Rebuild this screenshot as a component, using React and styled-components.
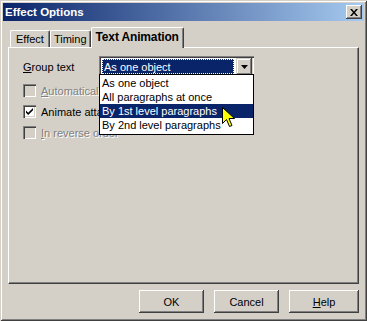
import styled, { createGlobalStyle } from 'styled-components'

const Global = createGlobalStyle`
    html, body {
        margin: 0;
        padding: 0;
        background: #d4d0c8;
    }
    body {
        font-family: 'Liberation Sans', Arial, sans-serif;
        font-size: 11px;
        color: #000;
    }
`

const options = ['As one object', 'All paragraphs at once', 'By 1st level paragraphs', 'By 2nd level paragraphs']

function App() {
    return (
        <>
            <Global />
            <Window>
                <TitleBar>
                    <Title>Effect Options</Title>
                    <CloseButton>
                        <svg width='8' height='7' viewBox='0 0 8 7'>
                            <path d='M0 0h2l2 2.5L6 0h2L5 3.5 8 7H6L4 4.5 2 7H0l3-3.5z' fill='#000' />
                        </svg>
                    </CloseButton>
                </TitleBar>

                <Body>
                    <TabRow>
                        <Tab>Effect</Tab>
                        <Tab $tight>Timing</Tab>
                        <Tab $active>Text Animation</Tab>
                    </TabRow>

                    <Panel>
                        <GroupRow>
                            <Label>
                                <u>G</u>roup text
                            </Label>
                            <Combo>
                                <ComboValue>
                                    <Focus>As one object</Focus>
                                </ComboValue>
                                <DropButton>
                                    <svg width='7' height='4' viewBox='0 0 7 4'>
                                        <path d='M0 0h7L3.5 4z' fill='#000' />
                                    </svg>
                                </DropButton>
                                <List>
                                    {options.map((o, i) => (
                                        <Option key={o} $selected={i === 2}>
                                            {o}
                                        </Option>
                                    ))}
                                </List>
                                <Cursor width='13' height='21' viewBox='0 0 13 21'>
                                    <path
                                        d='M0.5 0.5V16.5L4.5 12.5L7.5 19.5L10 18.5L7 11.5H12.5Z'
                                        fill='#ffff00'
                                        stroke='#000'
                                        strokeWidth='1'
                                    />
                                </Cursor>
                            </Combo>
                        </GroupRow>

                        <CheckRow $disabled>
                            <Box $disabled />
                            <span>
                                <u>A</u>utomatically after
                            </span>
                        </CheckRow>
                        <CheckRow>
                            <Box>
                                <svg width='9' height='9' viewBox='0 0 9 9'>
                                    <path d='M1 3.5l2.2 2.2L8 1v2.2L3.2 8 1 5.8z' fill='#000' />
                                </svg>
                            </Box>
                            <span>Animate attached shape</span>
                        </CheckRow>
                        <CheckRow $disabled>
                            <Box $disabled />
                            <span>
                                <u>I</u>n reverse order
                            </span>
                        </CheckRow>
                    </Panel>

                    <Footer>
                        <Button>OK</Button>
                        <Button>Cancel</Button>
                        <Button $wide>
                            <u>H</u>elp
                        </Button>
                    </Footer>
                </Body>
            </Window>
        </>
    )
}

const Window = styled.div`
    width: 367px;
    height: 321px;
    box-sizing: border-box;
    padding: 3px;
    background: #d4d0c8;
    box-shadow:
        inset 1px 1px 0 #d4d0c8,
        inset -1px -1px 0 #404040,
        inset 2px 2px 0 #ffffff,
        inset -2px -2px 0 #808080;
    display: flex;
    flex-direction: column;
`

const TitleBar = styled.div`
    height: 18px;
    display: flex;
    align-items: center;
    justify-content: space-between;
    padding: 0 2px 0 2px;
    background: linear-gradient(to right, #0a246a, #a6caf0);
`

const Title = styled.div`
    color: #fff;
    font-weight: bold;
    font-size: 11.5px;
`

const CloseButton = styled.div`
    width: 16px;
    height: 14px;
    box-sizing: border-box;
    background: #d4d0c8;
    display: flex;
    align-items: center;
    justify-content: center;
    box-shadow:
        inset -1px -1px 0 #404040,
        inset 1px 1px 0 #ffffff,
        inset -2px -2px 0 #808080;
`

const Body = styled.div`
    flex: 1;
    display: flex;
    flex-direction: column;
    padding: 6px 5px 0 5px;
`

const TabRow = styled.div`
    display: flex;
    align-items: flex-end;
    height: 20px;
    padding-left: 2px;
    position: relative;
    z-index: 1;
`

const Tab = styled.div`
    height: ${(p) => (p.$active ? '21px' : '17px')};
    box-sizing: border-box;
    padding: 0 ${(p) => (p.$active ? '4px' : p.$tight ? '3px' : '5px')};
    margin-bottom: ${(p) => (p.$active ? '-1px' : '0')};
    display: flex;
    align-items: center;
    padding-bottom: ${(p) => (p.$active ? '2px' : '0')};
    font-size: ${(p) => (p.$active ? '12px' : '11px')};
    font-weight: ${(p) => (p.$active ? 'bold' : 'normal')};
    letter-spacing: ${(p) => (p.$active ? '-0.15px' : '0')};
    background: #d4d0c8;
    border-top: 1px solid #fff;
    border-left: 1px solid #fff;
    border-right: 1px solid #404040;
    border-radius: 2px 2px 0 0;
    box-shadow: inset -1px 0 0 #808080;
`

const Panel = styled.div`
    height: 237px;
    box-sizing: border-box;
    border-top: 1px solid #fff;
    border-left: 1px solid #fff;
    border-right: 1px solid #404040;
    border-bottom: 1px solid #404040;
    box-shadow: inset -1px -1px 0 #808080;
    padding: 8px 0 0 14px;
    display: flex;
    flex-direction: column;
`

const GroupRow = styled.div`
    display: flex;
    align-items: center;
    height: 21px;
    margin-bottom: 3px;
`

const Label = styled.div`
    width: 76px;
`

const Combo = styled.div`
    position: relative;
    width: 155px;
    height: 21px;
    box-sizing: border-box;
    background: #fff;
    display: flex;
    padding: 2px;
    gap: 1px;
    box-shadow:
        inset 1px 1px 0 #808080,
        inset 2px 2px 0 #404040,
        inset -1px -1px 0 #ffffff,
        inset -2px -2px 0 #d4d0c8;
`

const ComboValue = styled.div`
    flex: 1;
    padding: 1px;
    display: flex;
`

const Focus = styled.div`
    flex: 1;
    background: #0a246a;
    color: #fff;
    outline: 1px dotted #fff;
    outline-offset: -1px;
    display: flex;
    align-items: center;
    padding-left: 2px;
`

const DropButton = styled.div`
    width: 16px;
    height: 17px;
    box-sizing: border-box;
    background: #d4d0c8;
    display: flex;
    align-items: center;
    justify-content: center;
    box-shadow:
        inset -1px -1px 0 #404040,
        inset 1px 1px 0 #d4d0c8,
        inset -2px -2px 0 #808080,
        inset 2px 2px 0 #ffffff;
`

const List = styled.div`
    position: absolute;
    left: 0;
    top: 18px;
    width: 155px;
    box-sizing: border-box;
    background: #fff;
    border: 1px solid #000;
    padding: 1px 0 2px 0;
    z-index: 2;
`

const Option = styled.div`
    height: 14px;
    line-height: 14px;
    padding-left: 2px;
    background: ${(p) => (p.$selected ? '#0a246a' : 'transparent')};
    color: ${(p) => (p.$selected ? '#fff' : '#000')};
    white-space: nowrap;
`

const Cursor = styled.svg`
    position: absolute;
    left: 123px;
    top: 51px;
    z-index: 3;
`

const CheckRow = styled.div`
    display: flex;
    align-items: center;
    gap: 5px;
    height: 21px;
    white-space: nowrap;
    color: ${(p) => (p.$disabled ? '#808080' : '#000')};
    text-shadow: ${(p) => (p.$disabled ? '1px 1px 0 #fff' : 'none')};
`

const Box = styled.div`
    width: 13px;
    height: 13px;
    box-sizing: border-box;
    background: ${(p) => (p.$disabled ? '#d4d0c8' : '#fff')};
    display: flex;
    align-items: center;
    justify-content: center;
    box-shadow:
        inset 1px 1px 0 #808080,
        inset 2px 2px 0 #404040,
        inset -1px -1px 0 #ffffff,
        inset -2px -2px 0 #d4d0c8;
`

const Footer = styled.div`
    display: flex;
    justify-content: flex-end;
    gap: 10px;
    padding: 6px 0 0 0;
`

const Button = styled.div`
    width: ${(p) => (p.$wide ? '70px' : '65px')};
    height: 23px;
    box-sizing: border-box;
    display: flex;
    align-items: center;
    justify-content: center;
    background: #d4d0c8;
    box-shadow:
        inset -1px -1px 0 #404040,
        inset 1px 1px 0 #ffffff,
        inset -2px -2px 0 #808080;
`

export default App
